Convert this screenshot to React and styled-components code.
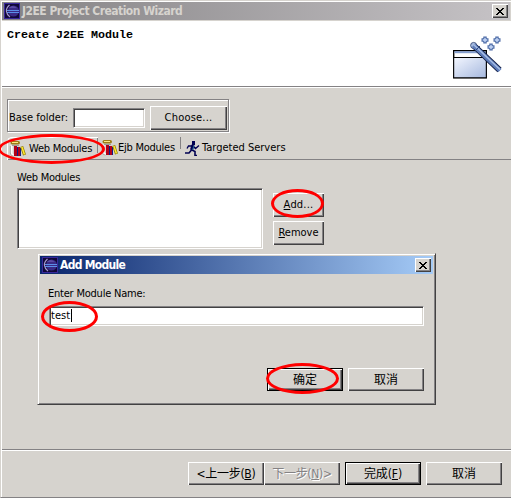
import React from "react";
import styled, { createGlobalStyle, css } from "styled-components";

const face = "#d6d3ce";
const shade = "#848284";
const dark = "#424142";

const Global = createGlobalStyle`
  * { box-sizing: border-box; }
  html, body { margin: 0; background: ${face}; overflow: hidden; }
  body { font: 11px/14px "DejaVu Sans Condensed", "DejaVu Sans", "Noto Sans CJK SC", sans-serif; color: #000; }
  svg { display: block; flex: none; }
`;

const Window = styled.div`
  position: relative; width: 511px; height: 498px; background: ${face};
  border-left: 1px solid ${face}; border-top: 1px solid ${face};
  border-bottom: 1px solid ${shade};
  box-shadow: inset 1px 1px #fff;
  padding: 1px 0 0 1px;
  display: flex; flex-direction: column;
`;
const TitleBar = styled.header`
  height: 18px; width: ${(p) => p.$w}px; flex: none;
  display: flex; align-items: center; padding: 0 2px; gap: 2px;
  color: ${(p) => (p.$active ? "#fff" : face)};
  background: ${(p) => (p.$active
    ? "linear-gradient(90deg, #08246b, #a5cbf7)"
    : "linear-gradient(90deg, #848284, #c6c3c6)")};
`;
const Title = styled.h1`
  margin: 0; flex: 1; white-space: nowrap;
  font: bold 12px/16px "DejaVu Sans Condensed", "DejaVu Sans", sans-serif;
  letter-spacing: ${(p) => p.$ls || 0}px;
`;
const CloseButton = styled.button`
  width: 16px; height: 14px; padding: 0 0 0 1px; border: 0; background: ${face};
  display: flex; align-items: center; justify-content: center;
  box-shadow: inset 1px 1px #fff, inset -1px -1px ${dark}, inset -2px -2px ${shade};
`;
const Banner = styled.section`
  height: 67px; margin-top: 1px; width: 509px; flex: none; background: #fff;
  border-bottom: 1px solid #fff; box-shadow: inset 0 -1px ${shade};
  display: flex; justify-content: space-between; padding: 7px 8px 0 5px;
`;
const BannerTitle = styled.h2`
  margin: 0; font: bold 11.67px/14px "Liberation Mono", monospace; white-space: pre;
`;
const Wand = styled.div`
  padding-top: 8px;
`;
const Text = styled.span`
  white-space: nowrap; letter-spacing: ${(p) => p.$ls || 0}px;
`;
const Group = styled.section`
  margin: 11px 0 0 5px; width: 222px; height: 33px; flex: none;
  border: 1px solid ${shade}; box-shadow: 1px 1px #fff, inset 1px 1px #fff;
  display: flex; align-items: center; padding: 4px 1px 0;
`;
const Field = styled.div`
  width: ${(p) => p.$w}px; height: ${(p) => p.$h}px; background: #fff; flex: none;
  border: 1px solid; border-color: ${shade} #fff #fff ${shade};
  box-shadow: inset 1px 1px ${dark}, inset -1px -1px ${face};
  padding: 2px 1px; display: flex;
  margin: ${(p) => p.$m || 0};
`;
const Caret = styled.i`
  width: 1px; height: 13px; margin-left: 1px; background: #000;
`;
const Button = styled.button`
  width: ${(p) => p.$w || 76}px; height: ${(p) => p.$h || 23}px; flex: none;
  border: 0; padding: 0; background: ${face}; color: #000; white-space: nowrap;
  font: 12px/16px "DejaVu Sans Condensed", "DejaVu Sans", "Noto Sans CJK SC", sans-serif;
  font-size: ${(p) => p.$size || 12}px;
  letter-spacing: ${(p) => p.$ls || 0}px;
  box-shadow: inset 1px 1px #fff, inset -1px -1px ${dark}, inset -2px -2px ${shade};
  ${(p) => p.$primary && css`
    box-shadow: inset 0 0 0 1px #000, inset 2px 2px #fff, inset -2px -2px ${dark}, inset -3px -3px ${shade};
  `}
  ${(p) => p.disabled && css`color: ${shade}; text-shadow: 1px 1px #fff;`}
`;
const Tabs = styled.nav`
  margin: 5px 0 0 5px; width: 504px; height: 23px; flex: none; display: flex;
  border-bottom: 1px solid ${shade};
`;
const Tab = styled.div`
  width: ${(p) => p.$w}px; height: 22px; display: flex; align-items: center;
  padding: 0 0 0 ${(p) => p.$pad}px; gap: ${(p) => p.$gap}px;
  ${(p) => p.$selected && css`
    border: 1px solid #fff; border-width: 1px 0 0 1px; border-radius: 5px 0 0 0; height: 23px;
  `}
  ${(p) => p.$divider && css`
    background: linear-gradient(${shade}, ${shade}) right top / 1px ${p.$divider}px no-repeat;
  `}
`;
const Modules = styled.section`
  margin: 11px 0 0 15px; flex: none; display: flex; flex-direction: column;
`;
const ModulesRow = styled.div`
  display: flex; gap: 10px; margin-top: 3px;
`;
const Stack = styled.div`
  display: flex; flex-direction: column; gap: 4px; padding-top: 5px;
`;
const Footer = styled.footer`
  margin-top: auto; height: 48px; width: 509px; flex: none;
  border-top: 1px solid ${shade}; box-shadow: inset 0 1px #fff;
  display: flex; padding: 12px 0 0 186px;
`;
const Gap = styled.span`
  width: 5px; flex: none;
`;
const Dialog = styled.div`
  position: absolute; left: 36px; top: 252px; width: 399px; height: 152px; background: ${face};
  border: 1px solid; border-color: ${face} ${dark} ${dark} ${face};
  box-shadow: inset 1px 1px #fff, inset -1px -1px ${shade};
  padding: 2px; display: flex; flex-direction: column;
`;
const DialogBody = styled.div`
  padding: 13px 9px 0 8px; display: flex; flex-direction: column;
`;
const DialogActions = styled.div`
  display: flex; justify-content: flex-end; gap: 5px; margin-top: 42px;
`;
const Ring = styled.div`
  position: absolute; left: ${(p) => p.$x}px; top: ${(p) => p.$y}px;
  width: ${(p) => p.$w}px; height: ${(p) => p.$h}px;
  border: 3px solid #f00; border-radius: 50%; pointer-events: none;
`;

const CloseIcon = () => (
  <svg width="9" height="7" viewBox="0 0 9 7" shapeRendering="crispEdges">
    <path d="M0 0h2v1h1v1h2V1h1V0h2v1H7v1H6v1H5v1h1v1h1v1h1v1H6V6H5V5H3v1H2v1H0V6h1V5h1V4h1V3H2V2H1V1H0z" />
  </svg>
);
const EclipseIcon = () => (
  <svg width="16" height="16" viewBox="0 0 16 16">
    <path fill="#39289c" d="M0 0h16v16H0z" />
    <path fill="#100838" d="M1 1h14v14H1z" />
    <circle cx="9.5" cy="8" r="5.5" fill="#3a2a86" />
    <path fill="#5a4aa5" d="M6 4q3-2.500 7 1H5z" />
    <path d="M5.500 2Q2 5 2.500 8.500T6 14" fill="none" stroke="#a596ce" strokeWidth="1.300" />
    <path fill="#5a8ee7" d="M3 7h12v1H3zM3 9h12v1H3z" />
  </svg>
);
const BooksIcon = () => (
  <svg width="17" height="16" viewBox="0 0 17 16">
    <path d="M2.500 4.500v7.500q0 2 2.500 2.500" fill="none" stroke="#fff" strokeWidth="2" />
    <path d="M1.300 5v7q0 3 3.500 3.200" fill="none" stroke="#9c9a94" strokeWidth=".8" />
    <rect x="1.500" y="0" width="9.500" height="3.500" rx="1.700" fill="#9c7d18" />
    <path fill="#ffe784" d="M3 1h6v1H3z" />
    <path fill="#848284" d="M3 4h7v.700H3z" />
    <path fill="#b50018" d="M5 5h3v10H5zM9 6h2v9H9z" />
    <path fill="#101c84" d="M8 6h1v9H8zM11 7h1v8h-1z" />
    <path d="M12.700 5.500l2.800 8.500" stroke="#8c7900" strokeWidth="3" />
    <path d="M12.900 6l2.500 7.500" stroke="#ffe731" strokeWidth="1.600" />
  </svg>
);
const RunnerIcon = () => (
  <svg width="15" height="15" viewBox="0 0 15 15" fill="none" stroke="#000052">
    <path fill="#000052" stroke="none" d="M7 0h3v4H7z" />
    <path d="M8 4L6.500 9" strokeWidth="3" />
    <path d="M7 5H3.500L2 7.500M8.500 5.500l2 2 3.500-3" strokeWidth="1.400" />
    <path d="M6.500 9L4 12H0M7 9l3 1.500v4h2" strokeWidth="1.600" />
    <path d="M9 4.500L7.500 9" stroke="#2992b5" strokeWidth=".7" />
  </svg>
);
const WandIcon = () => (
  <svg width="50" height="43" viewBox="0 0 50 43">
    <defs>
      <linearGradient id="pane" x2="1" y2="1">
        <stop stopColor="#f4f7ff" /><stop offset="1" stopColor="#a5b8de" />
      </linearGradient>
    </defs>
    <rect x=".7" y="14.700" width="32.600" height="27" fill="#fff" stroke="#000" strokeWidth="1.400" />
    <path fill="#849ece" d="M1.400 15.200h31v2h-31z" />
    <rect x=".7" y="21.500" width="32.600" height="20.300" fill="url(#pane)" stroke="#000" strokeWidth="1" />
    <path d="M20 8.800L46.500 34" stroke="#101c42" strokeWidth="6" />
    <circle cx="20.600" cy="9.400" r="3" fill="#a5bade" stroke="#293c6b" strokeWidth=".8" />
    <path d="M20.500 9.300L47 34.500" stroke="#5f7dba" strokeWidth="4.400" />
    <path d="M20.800 8.800L47 33.500" stroke="#a9bfe6" strokeWidth="1.400" />
    <path d="M23 14l4-4" stroke="#314a84" />
    <path d="M32 .5v7M28.500 4h7M44 .5v7M40.500 4h7M38 7.500v7M34.500 11h7" stroke="#4a69a5" strokeWidth="3.400" />
    <path stroke="#c6d7f7" strokeWidth="1.400" d="M32 1.700v4.600M29.700 4h4.600M44 1.700v4.600M41.700 4h4.600M38 8.700v4.600M35.700 11h4.600" />
  </svg>
);

export default function App() {
  return (
    <>
      <Global />
      <Window>
        <TitleBar $w={508}>
          <EclipseIcon />
          <Title $ls={-0.52}>J2EE Project Creation Wizard</Title>
          <CloseButton aria-label="Close"><CloseIcon /></CloseButton>
        </TitleBar>
        <Banner>
          <BannerTitle>Create J2EE Module</BannerTitle>
          <Wand><WandIcon /></Wand>
        </Banner>
        <Group>
          <Text>Base folder:</Text>
          <Field $w={72} $h={20} $m="0 5px 0 auto" />
          <Button $w={77} $h={24} $size={11} $ls={0.2}>Choose...</Button>
        </Group>
        <Tabs>
          <Tab $w={91} $pad={1} $gap={3} $selected $divider={15}>
            <BooksIcon /><Text $ls={-0.25}>Web Modules</Text>
          </Tab>
          <Tab $w={83} $pad={3} $gap={0} $divider={12}>
            <BooksIcon /><Text $ls={-0.25}>Ejb Modules</Text>
          </Tab>
          <Tab $w={120} $pad={4} $gap={2}><RunnerIcon /><Text>Targeted Servers</Text></Tab>
        </Tabs>
        <Modules>
          <Text $ls={-0.25}>Web Modules</Text>
          <ModulesRow>
            <Field $w={246} $h={61} />
            <Stack>
              <Button $w={51} $h={24} $size={11} $ls={0.2}><u>A</u>dd...</Button>
              <Button $w={51} $h={24} $size={11}><u>R</u>emove</Button>
            </Stack>
          </ModulesRow>
        </Modules>
        <Footer>
          <Button $ls={-0.3}>&lt;上一步(<u>B</u>)</Button>
          <Button $ls={-0.3} disabled>下一步(<u>N</u>)&gt;</Button>
          <Gap />
          <Button $ls={-0.1} $primary>完成(<u>F</u>)</Button>
          <Gap />
          <Button>取消</Button>
        </Footer>
        <Dialog>
          <TitleBar $active $w={393}>
            <EclipseIcon />
            <Title $ls={-0.7}>Add Module</Title>
            <CloseButton aria-label="Close"><CloseIcon /></CloseButton>
          </TitleBar>
          <DialogBody>
            <Text $ls={-0.22}>Enter Module Name:</Text>
            <Field $w={375} $h={20} $m="5px 0 0 1px"><Text>test</Text><Caret /></Field>
            <DialogActions>
              <Button $primary>确定</Button>
              <Button>取消</Button>
            </DialogActions>
          </DialogBody>
        </Dialog>
        <Ring $x={-3} $y={133} $w={107} $h={30} />
        <Ring $x={270} $y={188} $w={53} $h={29} />
        <Ring $x={40} $y={300} $w={57} $h={31} />
        <Ring $x={265} $y={362} $w={73} $h={31} />
      </Window>
    </>
  );
}
